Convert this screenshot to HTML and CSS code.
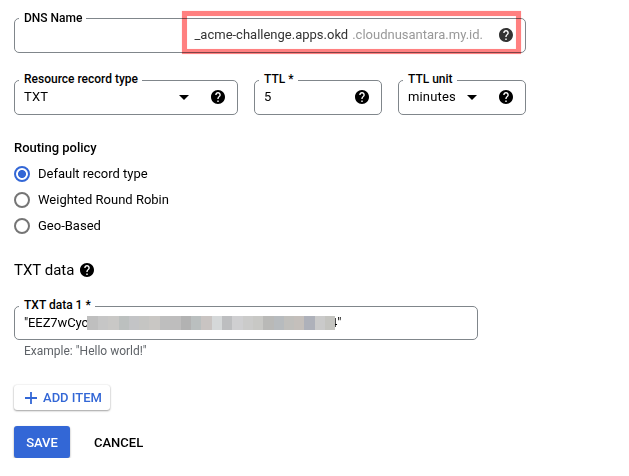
FILE: index.html
```html
<!DOCTYPE html>
<html lang="en">
<head>
<meta charset="utf-8">
<title>Create record set</title>
<link rel="stylesheet" href="styles.css">
</head>
<body>
<svg class="defs" aria-hidden="true">
  <symbol id="help" viewBox="2 2 20 20"><path d="M12 2C6.480 2 2 6.480 2 12s4.480 10 10 10 10-4.480 10-10S17.520 2 12 2zm1 17h-2v-2h2v2zm2.070-7.750l-.9.920C13.450 12.900 13 13.500 13 15h-2v-.5c0-1.100.45-2.100 1.170-2.830l1.240-1.260c.37-.36.59-.86.59-1.410 0-1.100-.9-2-2-2s-2 .9-2 2H8c0-2.210 1.790-4 4-4s4 1.790 4 4c0 .88-.36 1.680-.93 2.250z"/></symbol>
</svg>
<form class="form">
  <div class="field dns">
    <span class="label">DNS Name</span>
    <span class="value name">_acme-challenge.apps.okd</span>
    <span class="suffix">.cloudnusantara.my.id.</span>
    <svg class="help"><use href="#help"/></svg>
    <div class="highlight"></div>
  </div>
  <div class="row">
    <div class="field">
      <span class="label">Resource record type</span>
      <span class="value">TXT</span>
      <span class="arrow"></span>
      <svg class="help"><use href="#help"/></svg>
    </div>
    <div class="field">
      <span class="label">TTL *</span>
      <span class="value">5</span>
      <svg class="help"><use href="#help"/></svg>
    </div>
    <div class="field">
      <span class="label">TTL unit</span>
      <span class="value">minutes</span>
      <span class="arrow"></span>
      <svg class="help"><use href="#help"/></svg>
    </div>
  </div>
  <div class="policy">
    <div class="policy-title">Routing policy</div>
    <label class="option"><span class="radio checked"></span>Default record type</label>
    <label class="option"><span class="radio"></span>Weighted Round Robin</label>
    <label class="option"><span class="radio"></span>Geo-Based</label>
  </div>
  <h2 class="section">TXT data <svg class="help"><use href="#help"/></svg></h2>
  <div class="field txt">
    <span class="label">TXT data 1 *</span>
    <span class="start">"EEZ7wCyc</span>
    <span class="redacted"></span>
    <span class="end">4"</span>
  </div>
  <div class="hint">Example: "Hello world!"</div>
  <button type="button" class="btn add"><svg class="plus" viewBox="0 0 12 12"><path d="M6 0v12M0 6h12"/></svg>ADD ITEM</button>
  <div class="actions">
    <button type="button" class="btn save">SAVE</button>
    <button type="button" class="btn cancel">CANCEL</button>
  </div>
</form>
</body>
</html>
```
FILE: styles.css
```css
* { box-sizing: border-box; }
body {
  margin: 0;
  background: #fff;
  color: #000;
  font: 400 13px/16px Roboto, sans-serif;
}
.defs { position: absolute; width: 0; height: 0; }
.form { width: 512px; margin-left: 14px; padding-top: 18px; }
.field {
  position: relative;
  display: flex;
  align-items: center;
  height: 35px;
  padding: 0 12px 2px 9px;
  border: 1px solid #80868b;
  border-radius: 5px;
}
.label {
  position: absolute;
  top: -10px;
  left: 4px;
  padding: 0 4px 0 5px;
  background: #fff;
  font-size: 12px;
  font-weight: 500;
  white-space: nowrap;
}
.value { flex: 1; letter-spacing: .15px; }
.help { width: 14px; height: 14px; flex: none; display: block; }
.arrow {
  border: 5px solid transparent;
  border-top-color: #000;
  border-bottom: 0;
  margin-right: 22px;
}
.row { display: grid; grid-template-columns: 224px 128px 128px; gap: 16px; margin-top: 27px; }
.row .value { margin-top: -1px; }
.row .field { padding-bottom: 1px; }
.dns { padding-bottom: 1px; }
.dns .label { top: -9px; }
.dns .name { flex: none; margin-left: auto; color: #333; letter-spacing: 0; }
.suffix { margin: 0 16px 0 4px; color: #999; letter-spacing: 0; }
.dns .help { fill: #333; }
.highlight {
  position: absolute;
  left: 167px;
  top: -8px;
  width: 339px;
  height: 43px;
  border: 5px solid #ff8080;
  box-shadow: 0 0 1px #ffc4c4, inset 0 0 1px #ffc4c4;
  mix-blend-mode: multiply;
}
.policy { margin-top: 25px; }
.policy-title { font-weight: 500; margin-bottom: 5px; }
.option { display: flex; align-items: center; gap: 8px; height: 26px; }
.radio { width: 16px; height: 16px; border: 2px solid #757575; border-radius: 50%; }
.radio.checked { border-color: #3367d6; background: radial-gradient(circle, #3367d6 3.6px, transparent 4.4px); }
.section {
  display: flex;
  align-items: center;
  gap: 6px;
  margin: 23px 0 0;
  font-size: 15px;
  font-weight: 400;
  line-height: 16px;
}
.txt { width: 464px; height: 34px; margin-top: 28px; padding-bottom: 1px; }
.start { width: 63px; white-space: nowrap; letter-spacing: -.1px; }
.redacted {
  position: relative;
  flex: none;
  width: 248px;
  height: 14px;
  margin-top: 1px;
  background: linear-gradient(90deg,
    #bfbfbf 0 11px, #c6c6c6 0 21px, #c9c8c6 0 32px, #bcc0bf 0 42px,
    #c3c4c6 0 52px, #c5c5c3 0 62px, #c9c7c4 0 73px, #bebebe 0 83px,
    #bebdbd 0 94px, #b2b2b2 0 104px, #babfbf 0 114px, #c9c4c2 0 125px,
    #d5d8d9 0 135px, #bdbec0 0 145px, #cfcfd1 0 156px, #cbcbca 0 166px,
    #c8c8c5 0 176px, #b9b9b7 0 187px, #b7bbbe 0 197px, #c0bfbc 0 207px,
    #c4bfbb 0 217px, #aeb1ba 0 228px, #cacaca 0 238px, #c4c4c0 0);
}
.end { margin-left: -5px; }
.hint { margin: 3px 0 0 10px; color: #5f6368; font-size: 12px; }
.btn {
  display: flex;
  align-items: center;
  justify-content: center;
  border: 0;
  border-radius: 3px;
  padding: 0;
  background: none;
  color: #000;
  font: 500 13px/16px Roboto, sans-serif;
}
.add {
  width: 96px;
  height: 25px;
  margin-top: 26px;
  padding: 1px 0 0 3px;
  gap: 6px;
  background: #fff;
  color: #3367d6;
  box-shadow: 0 1px 2px rgba(0,0,0,.35), 0 0 2px rgba(0,0,0,.12);
}
.plus { width: 12px; height: 12px; margin-top: -1px; fill: none; stroke: #3367d6; stroke-width: 1.8; }
.actions { display: flex; align-items: center; gap: 24px; margin-top: 16px; }
.save {
  width: 56px;
  height: 32px;
  background: #3367d6;
  color: #fff;
  box-shadow: 0 1px 2px rgba(0,0,0,.4);
}
.save, .cancel { padding-top: 2px; }
```
